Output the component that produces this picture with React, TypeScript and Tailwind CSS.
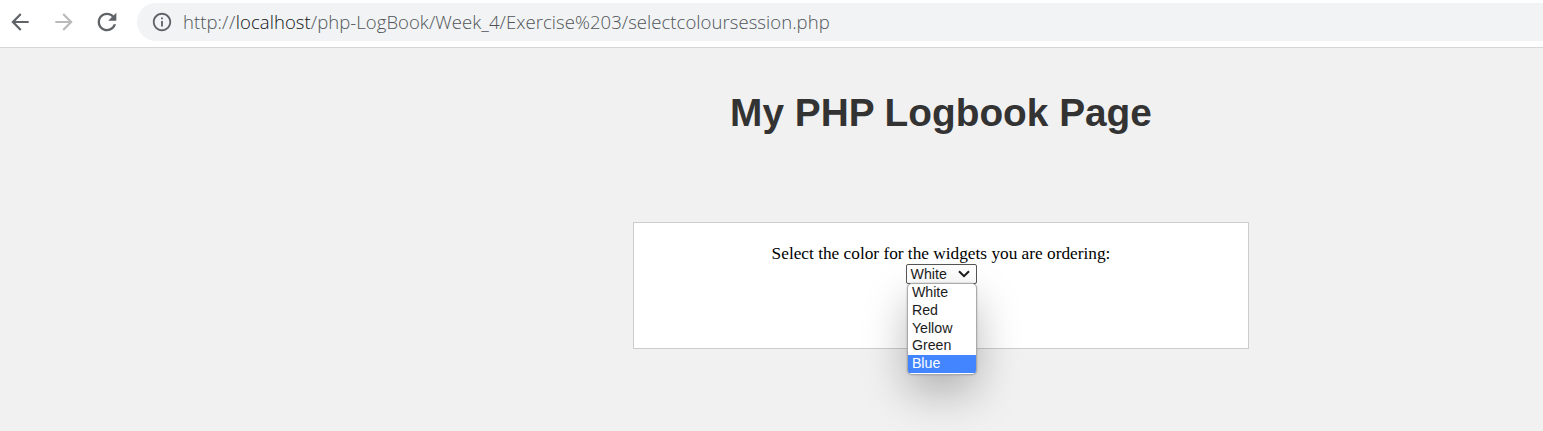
const colours = ['White', 'Red', 'Yellow', 'Green', 'Blue'];

function Toolbar() {
  return (
    <header className="flex h-12 items-start border-b border-[#d5d6d8] bg-white pl-[7px] pt-[3px]">
      <div className="flex h-[38px] items-center text-[#5f6368]">
        <svg className="h-[26px] w-[26px]" viewBox="0 0 24 24" fill="currentColor">
          <path d="M20 11H7.83l5.59-5.59L12 4l-8 8 8 8 1.41-1.41L7.83 13H20v-2z" />
        </svg>
        <svg className="ml-[18px] h-[26px] w-[26px] text-[#bababa]" viewBox="0 0 24 24" fill="currentColor">
          <path d="M12 4l-1.41 1.41L16.17 11H4v2h12.17l-5.58 5.59L12 20l8-8z" />
        </svg>
        <svg className="ml-4 h-7 w-7" viewBox="0 0 24 24" fill="currentColor">
          <path d="M17.65 6.35C16.2 4.9 14.21 4 12 4c-4.42 0-7.99 3.58-7.99 8s3.57 8 7.99 8c3.73 0 6.84-2.55 7.73-6h-2.08c-.82 2.33-3.04 4-5.65 4-3.31 0-6-2.69-6-6s2.69-6 6-6c1.66 0 3.14.69 4.22 1.78L13 11h7V4l-2.35 2.35z" />
        </svg>
      </div>
      <div className="ml-4 flex h-[38px] flex-1 items-center rounded-l-full bg-[#f1f3f4] pl-[14px]">
        <svg className="h-[22px] w-[22px] text-[#5f6368]" viewBox="0 0 24 24" fill="currentColor">
          <path d="M11 7h2v2h-2zm0 4h2v6h-2zm1-9C6.48 2 2 6.48 2 12s4.48 10 10 10 10-4.48 10-10S17.52 2 12 2zm0 18c-4.41 0-8-3.59-8-8s3.59-8 8-8 8 3.59 8 8-3.59 8-8 8z" />
        </svg>
        <span className="ml-[10px] whitespace-nowrap font-['Open_Sans',sans-serif] text-[18.5px] font-[350] leading-6 tracking-[0.06px] text-[#505458]">
          http:<span className="tracking-[0.6px]">//</span>
          <span className="text-[#101114]">localhost</span>/php-LogBook/Week_4/Exercise%203/selectcoloursession.php
        </span>
      </div>
    </header>
  );
}

function ColourSelect() {
  return (
    <div className="relative h-5 w-[71px] font-['Liberation_Sans',Arial,sans-serif] text-[14.2px] text-[#1c1c1c]">
      <div className="flex h-5 items-center justify-between rounded-[2px] border border-[#555] bg-white pl-1 pr-[6px] leading-[18px]">
        <span>White</span>
        <svg className="h-[8px] w-[12px]" viewBox="0 0 12 8" fill="none" stroke="currentColor" strokeWidth="2">
          <path d="M1 1.2l5 5 5-5" />
        </svg>
      </div>
      <ul className="absolute left-px top-[19px] w-[70px] overflow-hidden rounded-[5px] border border-[#aaa] bg-white pb-px shadow-[0_18px_44px_rgba(0,0,0,0.27),0_0_2px_rgba(0,0,0,0.25)]">
        {colours.map((c) => (
          <li
            key={c}
            className={c === 'Blue' ? 'h-[17.75px] bg-[#4285ff] pl-[4.4px] leading-[17px] text-white' : 'h-[17.75px] pl-[4.4px] leading-[17px]'}
          >
            {c}
          </li>
        ))}
      </ul>
    </div>
  );
}

export default function App() {
  return (
    <div className="h-[431px] overflow-hidden bg-[#f1f1f1]">
      <Toolbar />
      <main className="flex flex-col items-center pl-[339px]">
        <h1 className="mt-[42px] whitespace-nowrap font-['Liberation_Sans',Arial,sans-serif] text-[38.8px] font-bold leading-[46px] text-[#333]">
          My PHP Logbook Page
        </h1>
        <section className="mt-[86px] flex h-[127px] w-[616px] flex-col items-center border border-[#ccc] bg-white pt-[21px]">
          <p className="font-['Liberation_Serif','Times_New_Roman',serif] text-[17.3px] leading-5 text-black">
            Select the color for the widgets you are ordering:
          </p>
          <ColourSelect />
        </section>
      </main>
    </div>
  );
}
